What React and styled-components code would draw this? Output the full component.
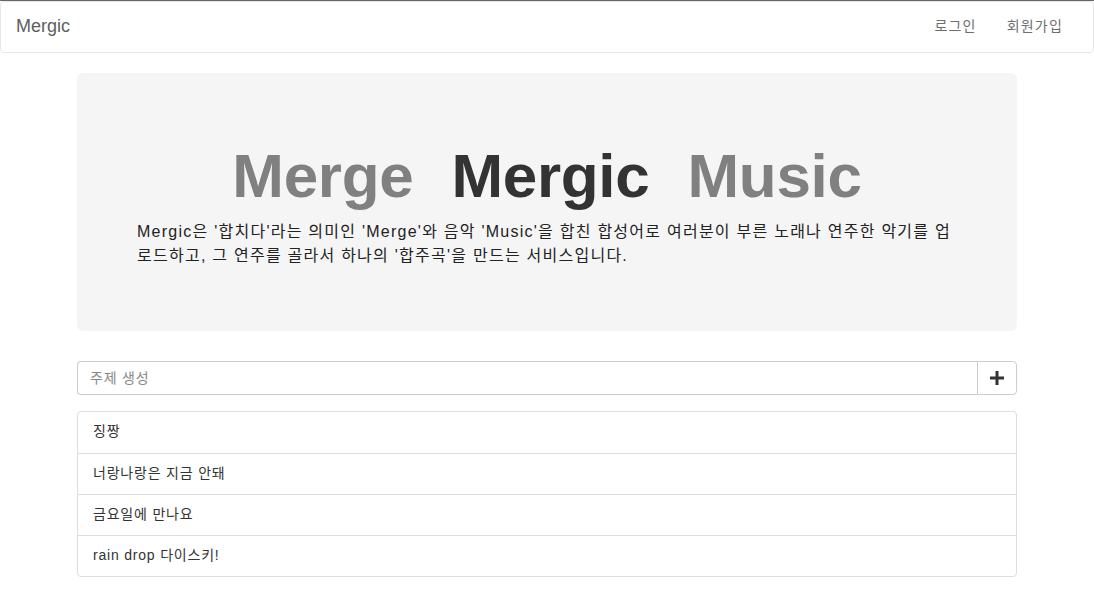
import React from 'react';
import styled, { createGlobalStyle } from 'styled-components';

const GlobalStyle = createGlobalStyle`
  html, body {
    margin: 0;
    padding: 0;
    background: #fff;
  }
  body {
    border-top: 1px solid #666;
    font-family: 'Liberation Sans', 'Noto Sans CJK KR', sans-serif;
    font-size: 14px;
    line-height: 1.42857;
    color: #333;
  }
  * {
    box-sizing: border-box;
  }
`;

const topics = ['징짱', '너랑나랑은 지금 안돼', '금요일에 만나요', 'rain drop 다이스키!'];

function App() {
  return (
    <>
      <GlobalStyle />
      <Navbar>
        <Brand>Mergic</Brand>
        <NavLinks>
          <NavLink>로그인</NavLink>
          <NavLink>회원가입</NavLink>
        </NavLinks>
      </Navbar>
      <Container>
        <Jumbotron>
          <Headline>
            <Word>Merge</Word>
            <Word strong>Mergic</Word>
            <Word>Music</Word>
          </Headline>
          <Lead>
            Mergic은 '합치다'라는 의미인 'Merge'와 음악 'Music'을 합친 합성어로 여러분이 부른 노래나
            연주한 악기를 업<br />
            로드하고, 그 연주를 골라서 하나의 '합주곡'을 만드는 서비스입니다.
          </Lead>
        </Jumbotron>

        <InputGroup>
          <TopicInput placeholder="주제 생성" />
          <AddButton>
            <svg width="14" height="14" viewBox="0 0 14 14">
              <path d="M5.5 0h3v5.5H14v3H8.5V14h-3V8.5H0v-3h5.5z" fill="#333" />
            </svg>
          </AddButton>
        </InputGroup>

        <ListGroup>
          {topics.map((t) => (
            <ListItem key={t}>{t}</ListItem>
          ))}
        </ListGroup>
      </Container>
    </>
  );
}

export default App;

const Navbar = styled.nav`
  height: 52px;
  border: 1px solid #e7e7e7;
  border-radius: 4px;
  background: #fff;
  display: flex;
  align-items: center;
  justify-content: space-between;
  padding: 0 15px;
  margin-bottom: 20px;
`;

const Brand = styled.div`
  font-size: 18px;
  color: #5e5e5e;
`;

const NavLinks = styled.div`
  display: flex;
`;

const NavLink = styled.div`
  padding: 15px;
  color: #6e6e6e;
  font-size: 14px;
  letter-spacing: 1.2px;
`;

const Container = styled.div`
  width: 940px;
  margin: 0 auto;
`;

const Jumbotron = styled.div`
  background: #f5f5f5;
  border-radius: 6px;
  padding: 48px 60px;
  margin-bottom: 30px;
`;

const Headline = styled.h1`
  margin: 20px 0 10px;
  display: flex;
  justify-content: center;
  gap: 38px;
  font-size: 62px;
  line-height: 69px;
  font-weight: bold;
  letter-spacing: -0.3px;
`;

const Word = styled.span`
  color: ${(p) => (p.strong ? '#333' : '#808080')};
`;

const Lead = styled.p`
  margin: 0 0 15px;
  font-size: 16px;
  line-height: 24px;
  color: #222;
  letter-spacing: 1.25px;
  white-space: nowrap;
`;

const InputGroup = styled.div`
  display: flex;
  height: 34px;
  margin-bottom: 16px;
`;

const TopicInput = styled.input`
  flex: 1;
  height: 34px;
  border: 1px solid #ccc;
  border-right: none;
  border-radius: 4px 0 0 4px;
  padding: 6px 12px;
  font-family: 'Liberation Sans', 'Noto Sans CJK KR', sans-serif;
  font-size: 14px;
  letter-spacing: 0.8px;
  color: #555;
  outline: none;
  &::placeholder {
    color: #888;
  }
`;

const AddButton = styled.button`
  width: 40px;
  height: 34px;
  border: 1px solid #ccc;
  border-radius: 0 4px 4px 0;
  background: #fff;
  display: flex;
  align-items: center;
  justify-content: center;
  padding: 0;
`;

const ListGroup = styled.div`
  border: 1px solid #ddd;
  border-radius: 4px;
  background: #fff;
`;

const ListItem = styled.div`
  height: 41px;
  padding: 10px 15px;
  font-size: 14px;
  color: #333;
  letter-spacing: 0.8px;
  & + & {
    border-top: 1px solid #ddd;
  }
`;
